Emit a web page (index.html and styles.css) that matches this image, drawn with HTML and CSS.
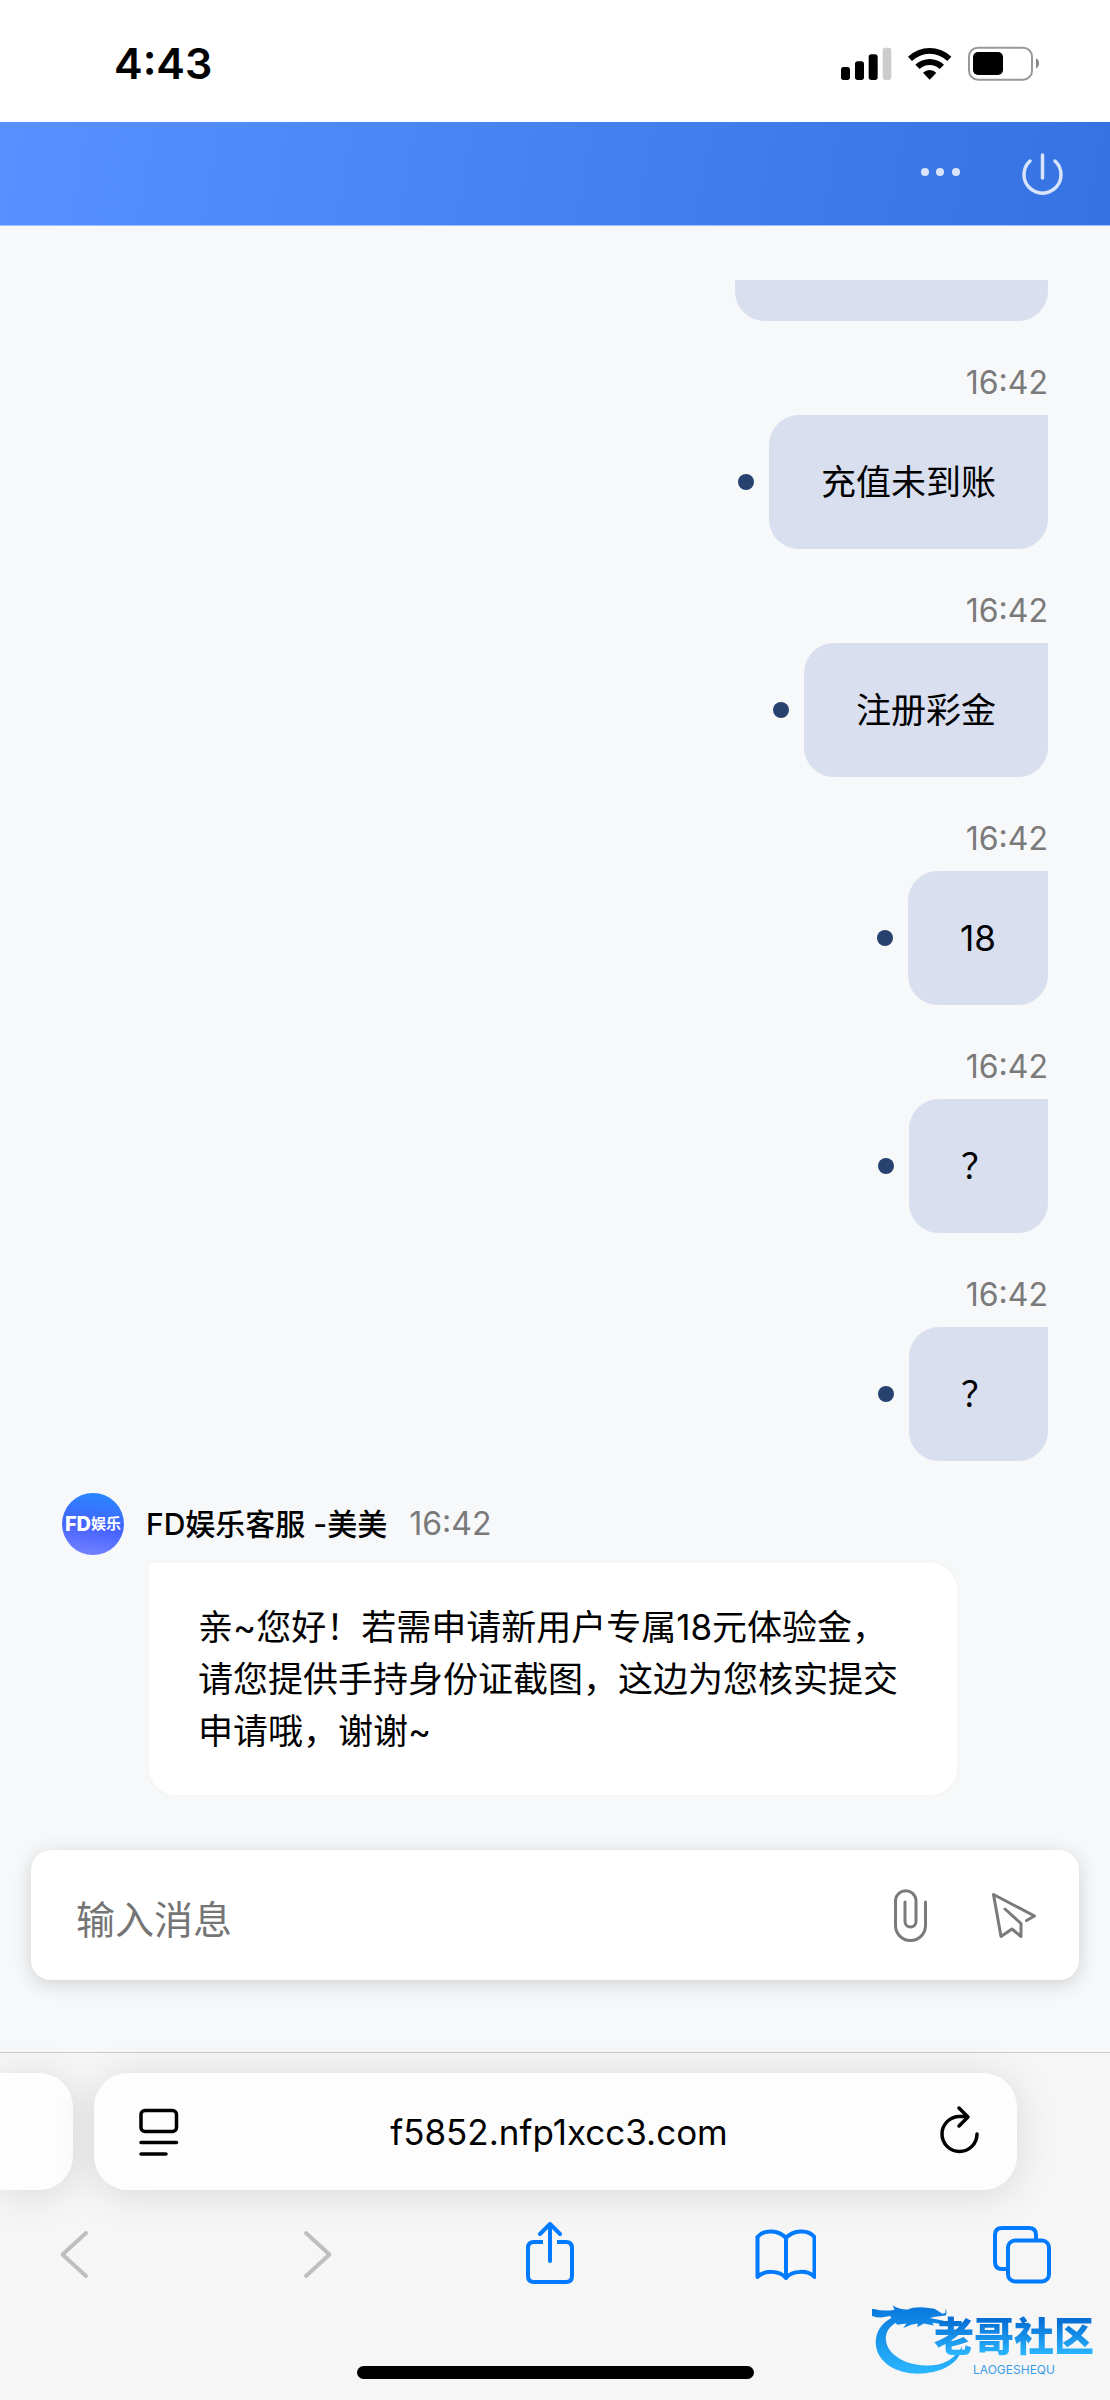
FILE: index.html
```html
<!DOCTYPE html>
<html lang="zh-CN">
<head>
<meta charset="utf-8">
<meta name="viewport" content="width=device-width, initial-scale=1">
<title>FD娱乐客服</title>
<link rel="stylesheet" href="styles.css">
</head>
<body>
<div class="screen">
  <div class="status">
    <time class="status-time">4:43</time>
    <svg class="status-icons" viewBox="420 132 600 111" role="img" aria-label="信号、无线网络、电池">
      <rect x="423" y="198" width="27" height="39" rx="8"/>
      <rect x="465" y="181" width="27" height="56" rx="8"/>
      <rect x="506" y="160" width="27" height="77" rx="8"/>
      <rect x="548" y="140" width="26" height="97" rx="8" fill="#ccc"/>
      <path d="M624 167a94 94 0 0 1 130 0l-12 13a76 76 0 0 0-106 0z"/>
      <path d="M646 191a62 62 0 0 1 86 0l-13 13a43 43 0 0 0-60 0z"/>
      <path d="M669 215a29 29 0 0 1 40 0l-20 21z"/>
      <rect x="807" y="140" width="189" height="96" rx="27" fill="none" stroke="#999" stroke-width="6"/>
      <rect x="819" y="153" width="90" height="69" rx="15"/>
      <path d="M1008 172q9 4 9 15t-9 16z" fill="#888"/>
    </svg>
  </div>

  <header class="topbar">
    <button class="icon-button" type="button" aria-label="更多">
      <svg width="60" height="60" viewBox="0 0 60 60" fill="#d9e4fb"><circle cx="15" cy="28" r="4"/><circle cx="30" cy="28" r="4"/><circle cx="46" cy="28" r="4"/></svg>
    </button>
    <button class="icon-button" type="button" aria-label="结束会话">
      <svg width="60" height="60" viewBox="0 0 60 60" fill="none" stroke="#d9e4fb" stroke-width="3.500" stroke-linecap="round"><path d="M30.500 11v23M18 17a18.500 18.500 0 1 0 25 0"/></svg>
    </button>
  </header>

  <main class="chat">
    <div class="bubble bubble-cut"></div>
    <section class="sent"><time class="stamp">16:42</time><div class="sent-row"><i class="dot"></i><p class="bubble">充值未到账</p></div></section>
    <section class="sent"><time class="stamp">16:42</time><div class="sent-row"><i class="dot"></i><p class="bubble">注册彩金</p></div></section>
    <section class="sent"><time class="stamp">16:42</time><div class="sent-row"><i class="dot"></i><p class="bubble">18</p></div></section>
    <section class="sent"><time class="stamp">16:42</time><div class="sent-row"><i class="dot"></i><p class="bubble">？</p></div></section>
    <section class="sent"><time class="stamp">16:42</time><div class="sent-row"><i class="dot"></i><p class="bubble">？</p></div></section>

    <section class="reply">
      <div class="reply-head">
        <div class="avatar"><b>FD</b><span>娱乐</span></div>
        <span class="agent">FD娱乐客服 -美美</span>
        <time class="stamp">16:42</time>
      </div>
      <p class="bubble bubble-reply">亲~您好！若需申请新用户专属18元体验金，请您提供手持身份证截图，这边为您核实提交申请哦，谢谢~</p>
    </section>
  </main>

  <form class="composer">
    <input class="composer-input" type="text" placeholder="输入消息" aria-label="输入消息">
    <button class="icon-button" type="button" aria-label="附件">
      <svg width="60" height="60" viewBox="880 1885 60 60" fill="none" stroke="#7a7a7a" stroke-width="3" stroke-linecap="round"><path d="M905 1902v19.500a5.500 5.500 0 0 0 11 0V1900a10.300 10.300 0 0 0-20.500 0v25.500a15 15 0 0 0 30 0V1902"/></svg>
    </button>
    <button class="icon-button" type="button" aria-label="发送">
      <svg width="60" height="60" viewBox="984 1885 60 60" fill="none" stroke="#7a7a7a" stroke-width="3" stroke-linecap="round" stroke-linejoin="round"><path d="M1005 1909l16 14.500v13l-9-7.500-11 7.500-7.500-42 41 21.500-8 4.500"/></svg>
    </button>
  </form>

  <footer class="browser">
    <div class="address-row">
      <div class="tab-previous"></div>
      <div class="address">
        <button class="icon-button" type="button" aria-label="页面设置">
          <svg width="60" height="60" viewBox="129 2102 60 60" fill="none" stroke="#000" stroke-width="3.500" stroke-linecap="round"><rect x="141" y="2110.500" width="35.500" height="21" rx="4"/><path d="M141 2142.500h35.500M141 2154h25"/></svg>
        </button>
        <input class="address-input" type="text" value="f5852.nfp1xcc3.com" aria-label="网址">
        <button class="icon-button" type="button" aria-label="刷新">
          <svg width="60" height="60" viewBox="929 2102 60 60" fill="none" stroke="#000" stroke-width="3.500" stroke-linecap="round" stroke-linejoin="round"><path d="M977 2134a17.500 17.500 0 1 1-17.500-17.500h8M959 2108l9 9-9 9"/></svg>
        </button>
      </div>
    </div>
    <nav class="tools">
      <button class="icon-button" type="button" aria-label="后退">
        <svg width="60" height="64" viewBox="45 2222 60 64" fill="none" stroke="#bfbfbf" stroke-width="4" stroke-linecap="round" stroke-linejoin="round"><path d="M86 2233l-23.500 21.500L86 2276"/></svg>
      </button>
      <button class="icon-button" type="button" aria-label="前进">
        <svg width="60" height="64" viewBox="281 2222 60 64" fill="none" stroke="#bfbfbf" stroke-width="4" stroke-linecap="round" stroke-linejoin="round"><path d="M306 2233l23.500 21.500L306 2276"/></svg>
      </button>
      <button class="icon-button" type="button" aria-label="分享">
        <svg width="60" height="64" viewBox="517 2222 60 64" fill="none" stroke="#007aff" stroke-width="4" stroke-linejoin="round"><path d="M543 2242h-9q-6 0-6 6v28q0 6 6 6h32q6 0 6-6v-28q0-6-6-6h-9"/><path d="M550 2261v-36M540 2234l10-10 10 10" stroke-linecap="round"/></svg>
      </button>
      <button class="icon-button icon-wide" type="button" aria-label="书签">
        <svg width="64" height="64" viewBox="752 2222 64 64" fill="none" stroke="#007aff" stroke-width="4" stroke-linejoin="round"><path d="M786 2238c-7-8-22-9-28.500-1v40c6.500-7 22-7 28.500 1 6.500-8 22-8 28.500-1v-40c-6.500-8-21.500-7-28.500 1v40"/></svg>
      </button>
      <button class="icon-button" type="button" aria-label="标签页">
        <svg width="60" height="64" viewBox="992 2222 60 64" fill="none" stroke="#007aff" stroke-width="4"><path d="M1007 2269h-5q-7 0-7-7v-27q0-7 7-7h27q7 0 7 7v5"/><rect x="1008" y="2240.500" width="41" height="41" rx="7"/></svg>
      </button>
    </nav>
    <div class="home-indicator"></div>
    <div class="brand">
      <svg class="brand-dragon" viewBox="60 350 280 240" aria-hidden="true">
        <defs><linearGradient id="dragon" gradientUnits="userSpaceOnUse" x1="0" y1="380" x2="0" y2="580"><stop offset="0" stop-color="#0878dc"/><stop offset="1" stop-color="#2cb7ff"/></linearGradient></defs>
        <g fill="url(#dragon)">
          <path d="M160 396C92 414 68 452 72 496c6 52 66 88 138 84 64-4 116-32 122-82-26 42-62 60-112 58-62-2-114-34-118-76-2-30 16-54 68-68z"/>
          <path d="M66 386q30 8 62 2l-6-13q22 13 46 12 18-8 50-6l30 4 24 15 10-3-2-12q8 8 2 20l-32 4-16 4 42 8-6 10-28-4 4 8-30-6-20 12 2-12-20 4-24 10 10-14-28 4-22-26-26 4q-38 0-52-25z"/>
        </g>
      </svg>
      <div class="brand-words"><strong>老哥社区</strong><small>LAOGESHEQU</small></div>
    </div>
  </footer>
</div>
</body>
</html>
```
FILE: styles.css
```css
* { box-sizing: border-box; }

body {
  margin: 0;
  background: #f7f8fa;
  color: #000;
  font-family: Inter, "Noto Sans CJK SC", sans-serif;
  font-size: 35px;
  line-height: 52px;
}

p { margin: 0; }

button, input {
  margin: 0;
  padding: 0;
  border: 0;
  background: none;
  color: inherit;
  font: inherit;
}

svg { display: block; }

.screen {
  display: flex;
  flex-direction: column;
  min-height: 100vh;
  overflow: hidden;
}

.icon-button {
  display: flex;
  flex: none;
  align-items: center;
  justify-content: center;
  width: 60px;
}

/* Status bar */
.status {
  display: flex;
  align-items: center;
  justify-content: space-between;
  height: 122px;
  padding: 4px 70px 0 114px;
  background: #fff;
}

.status-time {
  font-size: 43px;
  font-weight: 600;
}

.status-icons {
  width: 200px;
  height: 37px;
}

/* Chat header */
.topbar {
  display: flex;
  align-items: center;
  justify-content: flex-end;
  gap: 42px;
  height: 104px;
  padding-right: 38px;
  border-bottom: 1px solid #9fc0fb;
  background: linear-gradient(100deg, #5691ff, #3573e2);
}

/* Conversation */
.chat {
  flex: 1;
  padding: 54px 62px 52px;
}

.bubble {
  padding: 38px 49px;
  border: 3px solid #d9dfef;
  border-radius: 30px 0 30px 30px;
  background: #d9dfef;
}

.bubble-cut {
  width: 313px;
  height: 41px;
  margin-left: auto;
  padding: 0;
  border-radius: 0 0 30px 30px;
}

.sent {
  display: flex;
  flex-direction: column;
  align-items: flex-end;
  gap: 12px;
  margin-top: 42px;
}

.sent-row {
  display: flex;
  align-items: center;
  gap: 15px;
}

.dot {
  width: 16px;
  height: 16px;
  border-radius: 50%;
  background: #27426f;
}

.stamp {
  color: #7a7a7a;
  font-size: 32px;
  line-height: 40px;
}

.reply { margin-top: 32px; }

.reply-head {
  display: flex;
  align-items: center;
  height: 62px;
  margin-bottom: 5px;
}

.avatar {
  display: flex;
  align-items: center;
  justify-content: center;
  width: 62px;
  height: 62px;
  border-radius: 50%;
  background: linear-gradient(190deg, #2b84ff 10%, #4563ff 55%, #7b86ff);
  color: #fff;
  font-size: 15px;
  font-weight: 700;
  line-height: 20px;
}

.avatar b {
  font-size: 20px;
  font-weight: 800;
}

.agent {
  margin: 0 22px;
  font-size: 30px;
  font-weight: 500;
  line-height: 40px;
}

.bubble-reply {
  width: fit-content;
  margin: 0 88px 0 84px;
  border-color: #f5f6f6;
  border-radius: 0 30px 30px 30px;
  background: #fff;
}

/* Message composer */
.composer {
  display: flex;
  align-items: center;
  gap: 44px;
  height: 130px;
  margin: 0 31px 72px;
  padding: 0 35px 0 45px;
  border-radius: 20px;
  background: #fff;
  box-shadow: 0 4px 20px rgba(0, 0, 0, 0.16);
}

.composer-input {
  flex: 1;
  min-width: 0;
  height: 60px;
  padding-top: 8px;
  outline: 0;
  font-size: 39px;
}

.composer-input::placeholder {
  color: #757575;
  opacity: 1;
}

/* Browser controls */
.browser {
  position: relative;
  padding: 20px 0 21px;
  border-top: 1px solid #c9cacc;
  background: #f6f6f6;
}

.address-row {
  display: flex;
  gap: 21px;
  padding-right: 93px;
}

.tab-previous, .address {
  height: 117px;
  background: #fdfdfd;
  box-shadow: 0 4px 40px rgba(0, 0, 0, 0.12);
}

.tab-previous {
  flex: none;
  width: 73px;
  border-radius: 0 34px 34px 0;
}

.address {
  display: flex;
  flex: 1;
  align-items: center;
  min-width: 0;
  padding: 0 28px 0 35px;
  border-radius: 34px;
}

.address-input {
  flex: 1;
  min-width: 0;
  outline: 0;
  text-align: center;
}

.tools {
  display: flex;
  justify-content: space-between;
  padding: 32px 58px 80px 45px;
}

.icon-wide { width: 64px; }

.home-indicator {
  width: 397px;
  height: 13px;
  margin: 0 auto;
  border-radius: 7px;
  background: #000;
}

.brand {
  position: absolute;
  right: 16px;
  bottom: 23px;
  display: flex;
  align-items: flex-end;
}

.brand-dragon {
  width: 93px;
  height: 80px;
  margin-right: -31px;
}

.brand-words {
  display: flex;
  flex-direction: column;
  align-items: center;
}

.brand-words strong {
  background: linear-gradient(#0670d6 20%, #2cb7ff 85%);
  background-clip: text;
  color: transparent;
  font-size: 40px;
  font-weight: 900;
  line-height: 52px;
}

.brand-words small {
  color: #3c9be8;
  font-size: 12px;
  line-height: 14px;
}
```
